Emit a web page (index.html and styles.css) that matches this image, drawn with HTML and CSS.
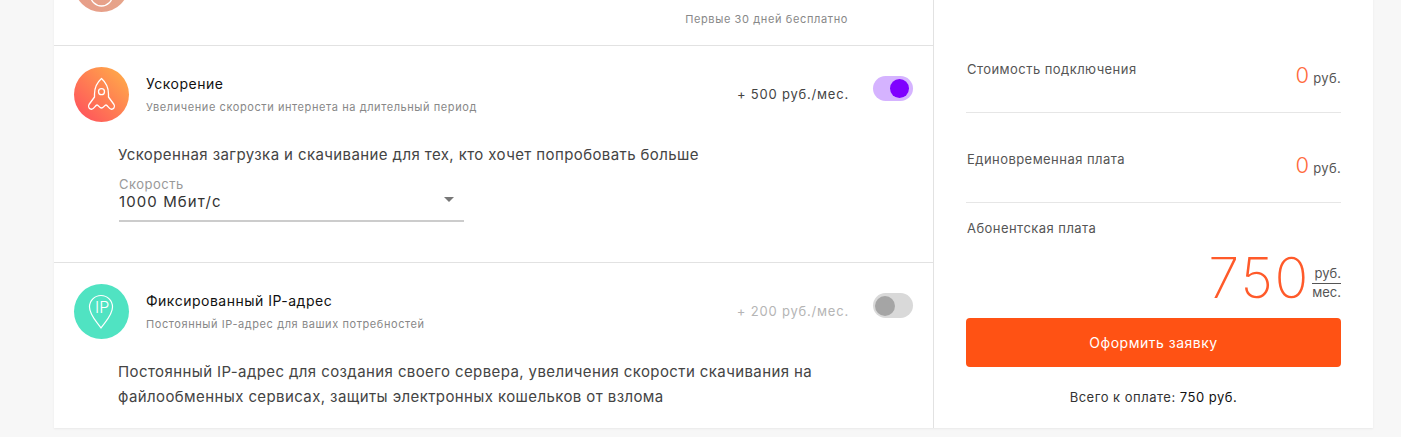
FILE: index.html
```html
<!DOCTYPE html>
<html>
<head>
    <meta charset="utf-8">
    <title>Подключение услуг</title>
    <link rel="stylesheet" href="styles.css">
</head>
<body>
    <div class="order-card">
        <div class="services">
            <!-- первая услуга, верх уходит за экран -->
            <div class="service service-first">
                <div class="service-head">
                    <div class="service-icon icon-peach">
                        <svg width="55" height="55" viewBox="0 0 55 55" fill="none" stroke="#fff" stroke-width="1.3"><circle cx="27.5" cy="38" r="11"/></svg>
                    </div>
                    <div class="service-info"></div>
                    <div class="service-price">
                        <div class="price-note">Первые 30 дней бесплатно</div>
                    </div>
                </div>
            </div>

            <!-- Ускорение -->
            <div class="service service-speed">
                <div class="service-head">
                    <div class="service-icon icon-orange">
                        <svg width="55" height="55" viewBox="0 0 55 55" fill="none" stroke="#fff" stroke-width="1.3" stroke-linejoin="round">
                            <path d="M27.5 11.5C23 15.5 20.5 22 20.5 27V30L15 37.5C13.5 40 15.5 42.5 18 42.2C20 42 21.5 38 23 38C24.5 38 25.5 41 27.5 41C29.5 41 30.5 38 32 38C33.5 38 35 42 37 42.2C39.5 42.5 41.5 40 40 37.5L34.5 30V27C34.5 22 32 15.5 27.5 11.5Z"/>
                            <circle cx="27.5" cy="24.7" r="3"/>
                        </svg>
                    </div>
                    <div class="service-info">
                        <div class="service-title">Ускорение</div>
                        <div class="service-sub">Увеличение скорости интернета на длительный период</div>
                    </div>
                    <div class="service-price">+ 500 руб./мес.</div>
                    <div class="switch switch-on"><span class="switch-knob"></span></div>
                </div>
                <div class="service-body">
                    <p class="service-text">Ускоренная загрузка и скачивание для тех, кто хочет попробовать больше</p>
                    <div class="select-box">
                        <div class="select-label">Скорость</div>
                        <div class="select-value">1000 Мбит/с</div>
                        <span class="select-arrow"></span>
                    </div>
                </div>
            </div>

            <!-- Фиксированный IP -->
            <div class="service service-ip">
                <div class="service-head">
                    <div class="service-icon icon-green">
                        <svg width="55" height="55" viewBox="0 0 55 55" fill="none" stroke="#fff" stroke-width="1.2">
                            <path d="M27 44C23.5 38.5 15.5 31.5 15.5 23C15.5 16.6 20.6 11.5 27 11.5C33.4 11.5 38.5 16.6 38.5 23C38.5 31.5 30.5 38.5 27 44Z"/>
                        </svg>
                        <span class="ip-mark">IP</span>
                    </div>
                    <div class="service-info">
                        <div class="service-title">Фиксированный IP-адрес</div>
                        <div class="service-sub">Постоянный IP-адрес для ваших потребностей</div>
                    </div>
                    <div class="service-price price-off">+ 200 руб./мес.</div>
                    <div class="switch"><span class="switch-knob"></span></div>
                </div>
                <div class="service-body">
                    <p class="service-text">Постоянный IP-адрес для создания своего сервера, увеличения скорости скачивания на файлообменных сервисах, защиты электронных кошельков от взлома</p>
                </div>
            </div>
        </div>

        <div class="summary">
            <div class="summary-row">
                <div class="summary-label">Стоимость подключения</div>
                <div class="summary-cost"><span class="cost-num">0</span> руб.</div>
            </div>
            <div class="summary-row">
                <div class="summary-label">Единовременная плата</div>
                <div class="summary-cost"><span class="cost-num">0</span> руб.</div>
            </div>
            <div class="summary-month">
                <div class="summary-label">Абонентская плата</div>
                <div class="month-cost">
                    <span class="month-num">750</span>
                    <div class="month-unit">
                        <div class="unit-top">руб.</div>
                        <div class="unit-bottom">мес.</div>
                    </div>
                </div>
            </div>
            <button class="order-btn">Оформить заявку</button>
            <div class="order-total">Всего к оплате: <span class="total-sum">750 руб.</span></div>
        </div>
    </div>
</body>
</html>
```

FILE: styles.css
```css
html, body {
    height: 437px;
    overflow: hidden;
}
body {
    margin: 0;
    background-color: #f7f7f7;
    font-family: Inter, "Noto Sans", sans-serif;
    color: #444;
}
.order-card {
    display: flex;
    width: 1319px;
    height: 492px;
    margin: -64px 0 0 54px;
    background-color: #fff;
    box-shadow: 0 1px 2px rgba(0, 0, 0, 0.06);
}
.services {
    width: 879px;
    flex-shrink: 0;
}
.service {
    border-bottom: 1px solid #e2e2e2;
}
.service-first {
    height: 109px;
}
.service-speed {
    height: 216px;
}
.service-ip {
    border-bottom: none;
}
.service-head {
    display: flex;
    align-items: flex-start;
    padding: 21px 20px 0;
}
.service-icon {
    position: relative;
    width: 55px;
    height: 55px;
    border-radius: 50%;
    flex-shrink: 0;
}
.service-icon svg {
    display: block;
}
.icon-peach {
    background: linear-gradient(45deg, #e89c88, #e4ab8c);
}
.icon-orange {
    background: linear-gradient(45deg, #ff4a5e, #ffb347);
}
.icon-green {
    background-color: #50e3c2;
}
.ip-mark {
    position: absolute;
    left: 21px;
    top: 15px;
    font-size: 16px;
    line-height: 16px;
    font-weight: 300;
    color: #fff;
}
.service-info {
    flex: 1;
    margin-left: 17px;
}
.service-title {
    margin-top: 7px;
    font-size: 14px;
    line-height: 20px;
    letter-spacing: 0.5px;
    color: #111;
}
.service-sub {
    margin-top: 5px;
    font-size: 11px;
    line-height: 16px;
    letter-spacing: 0.58px;
    color: #888;
}
.service-price {
    margin: 18px -1px 0 0;
    font-size: 13px;
    line-height: 18px;
    letter-spacing: 0.8px;
    color: #444;
}
.price-off {
    color: #b5b5b5;
}
.price-note {
    margin-top: 36px;
    font-size: 11px;
    line-height: 16px;
    letter-spacing: 0.62px;
    color: #888;
}
.service-first .service-price {
    margin-right: 65px;
}
.switch {
    width: 40px;
    height: 25px;
    margin: 9px 0 0 25px;
    padding: 3px 2px;
    box-sizing: border-box;
    border-radius: 13px;
    background-color: #d9d9d9;
}
.switch-knob {
    display: block;
    width: 20px;
    height: 20px;
    border-radius: 50%;
    background-color: #a5a5a5;
}
.switch-on {
    padding: 3px 4px;
    background-color: #d5b3ff;
}
.switch-on .switch-knob {
    margin-left: auto;
    width: 19px;
    height: 19px;
    background-color: #7f00ff;
}
.service-body {
    padding: 0 60px 0 64px;
}
.service-text {
    margin: 20px 0 0;
    font-size: 15px;
    line-height: 25px;
    letter-spacing: 0.4px;
}
.select-box {
    position: relative;
    width: 345px;
    height: 43px;
    margin: 10px 0 0 1px;
    border-bottom: 2px solid #ccc;
}
.select-label {
    font-size: 13px;
    line-height: 14px;
    letter-spacing: 0.5px;
    color: #999;
}
.select-value {
    margin-top: 1px;
    font-size: 15px;
    line-height: 20px;
    letter-spacing: 1.1px;
    color: #333;
}
.select-arrow {
    position: absolute;
    right: 10px;
    top: 20px;
    border-left: 5px solid transparent;
    border-right: 5px solid transparent;
    border-top: 5px solid #777;
}
.summary {
    flex: 1;
    border-left: 1px solid #e2e2e2;
    padding: 87px 32px 0;
}
.summary-row {
    display: flex;
    justify-content: space-between;
    height: 90px;
    box-sizing: border-box;
    padding-top: 37px;
    border-bottom: 1px solid #e6e6e6;
}
.summary-label {
    margin-left: 1px;
    font-size: 13px;
    line-height: 18px;
    letter-spacing: 0.45px;
    color: #555;
}
.summary-cost {
    margin-top: 3px;
    font-size: 13px;
    line-height: 24px;
    letter-spacing: 0.3px;
    color: #555;
}
.cost-num {
    font-size: 22px;
    font-weight: 300;
    color: #ff6a3c;
}
.summary-month {
    padding-top: 16px;
}
.month-cost {
    display: flex;
    justify-content: flex-end;
    margin-top: 13px;
}
.month-num {
    font-size: 56px;
    line-height: 56px;
    font-weight: 250;
    letter-spacing: 1.7px;
    color: #ff5a2a;
}
.month-unit {
    width: 29px;
    margin: 13px 0 0 2px;
    font-size: 13px;
    text-align: right;
    color: #555;
}
.unit-top {
    line-height: 20px;
    border-bottom: 1px solid #555;
}
.unit-bottom {
    line-height: 16px;
}
.order-btn {
    display: block;
    width: 100%;
    height: 49px;
    margin-top: 12px;
    border: none;
    border-radius: 4px;
    background-color: #ff5214;
    font-family: inherit;
    font-size: 14px;
    letter-spacing: 0.5px;
    color: #fff;
}
.order-total {
    margin-top: 21px;
    font-size: 13px;
    line-height: 18px;
    letter-spacing: 0.5px;
    text-align: center;
    color: #333;
}
.total-sum {
    color: #111;
}
```
